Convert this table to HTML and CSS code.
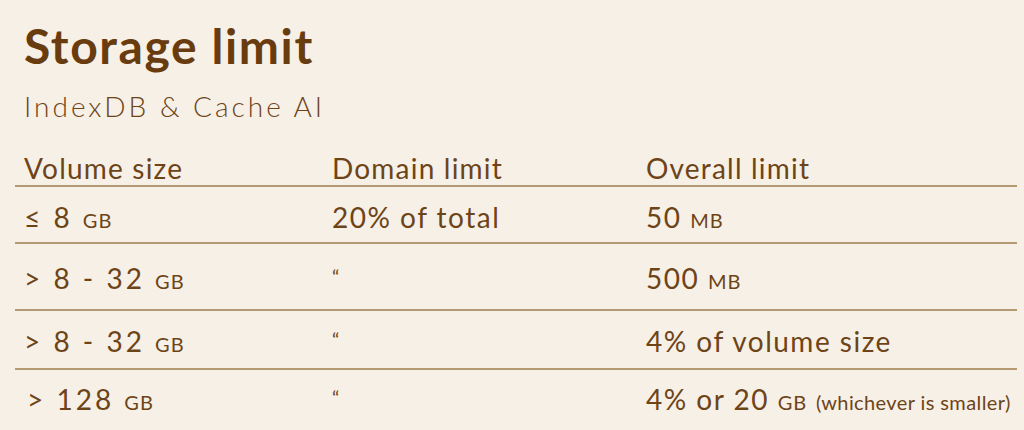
FILE: index.html
```html
<!DOCTYPE html>
<html lang="en">
<head>
<meta charset="utf-8">
<title>Storage limit</title>
<link rel="stylesheet" href="styles.css">
</head>
<body>
<main class="page">
  <h1 class="title">Storage limit</h1>
  <p class="subtitle">IndexDB &amp; Cache AI</p>
  <div class="table">
    <div class="row row-head">
      <div class="cell">Volume size</div>
      <div class="cell">Domain limit</div>
      <div class="cell">Overall limit</div>
    </div>
    <div class="row row-1">
      <div class="cell c1">≤ 8 <span class="unit">GB</span></div>
      <div class="cell">20% of total</div>
      <div class="cell">50 <span class="unit">MB</span></div>
    </div>
    <div class="row row-2">
      <div class="cell c1">&gt; 8 - 32 <span class="unit">GB</span></div>
      <div class="cell"><span class="ditto">“</span></div>
      <div class="cell">500 <span class="unit">MB</span></div>
    </div>
    <div class="row row-3">
      <div class="cell c1">&gt; 8 - 32 <span class="unit">GB</span></div>
      <div class="cell"><span class="ditto">“</span></div>
      <div class="cell">4% of volume size</div>
    </div>
    <div class="row row-4">
      <div class="cell c1 c1-indent">&gt; 128 <span class="unit">GB</span></div>
      <div class="cell"><span class="ditto">“</span></div>
      <div class="cell">4% or 20 <span class="unit">GB</span> <span class="note">(whichever is smaller)</span></div>
    </div>
  </div>
</main>
</body>
</html>
```

FILE: styles.css
```css
html, body {
  margin: 0;
  padding: 0;
  background: #f7f0e6;
}

body {
  font-family: Lato, "Open Sans", "Liberation Sans", sans-serif;
  color: #6d4418;
}

.page {
  padding: 22px 7px 0 15px;
}

.title {
  margin: 0;
  padding-left: 9px;
  font-size: 48px;
  font-weight: 700;
  line-height: 1;
  letter-spacing: 1.6px;
  color: #683c0f;
}

.subtitle {
  margin: 22px 0 0;
  padding-left: 9px;
  font-size: 28px;
  font-weight: 300;
  line-height: 1;
  letter-spacing: 3px;
}

.table {
  margin-top: 34px;
}

.row {
  display: grid;
  grid-template-columns: 308px 314px 1fr;
  border-bottom: 2px solid #b69a74;
  font-size: 28px;
  font-weight: 400;
  line-height: 28px;
  letter-spacing: 1.5px;
}

.row:last-child {
  border-bottom: none;
}

.cell {
  padding-left: 9px;
  white-space: nowrap;
}

.row-head { padding: 0 0 3px; letter-spacing: 1.2px; }
.row-1 { padding: 16px 0 11px; }
.row-2 { padding: 20px 0 17px; }
.row-3 { padding: 16px 0 13px; }
.row-4 { padding: 15px 0 0; }

.c1 {
  letter-spacing: 3px;
}

.c1-indent {
  padding-left: 12px;
}

.unit,
.note,
.ditto {
  line-height: 1;
}

.unit {
  font-size: 20px;
  letter-spacing: 1px;
}

.note {
  font-size: 20px;
  letter-spacing: 0.4px;
}

.ditto {
  font-size: 20px;
  vertical-align: 5px;
}
```
